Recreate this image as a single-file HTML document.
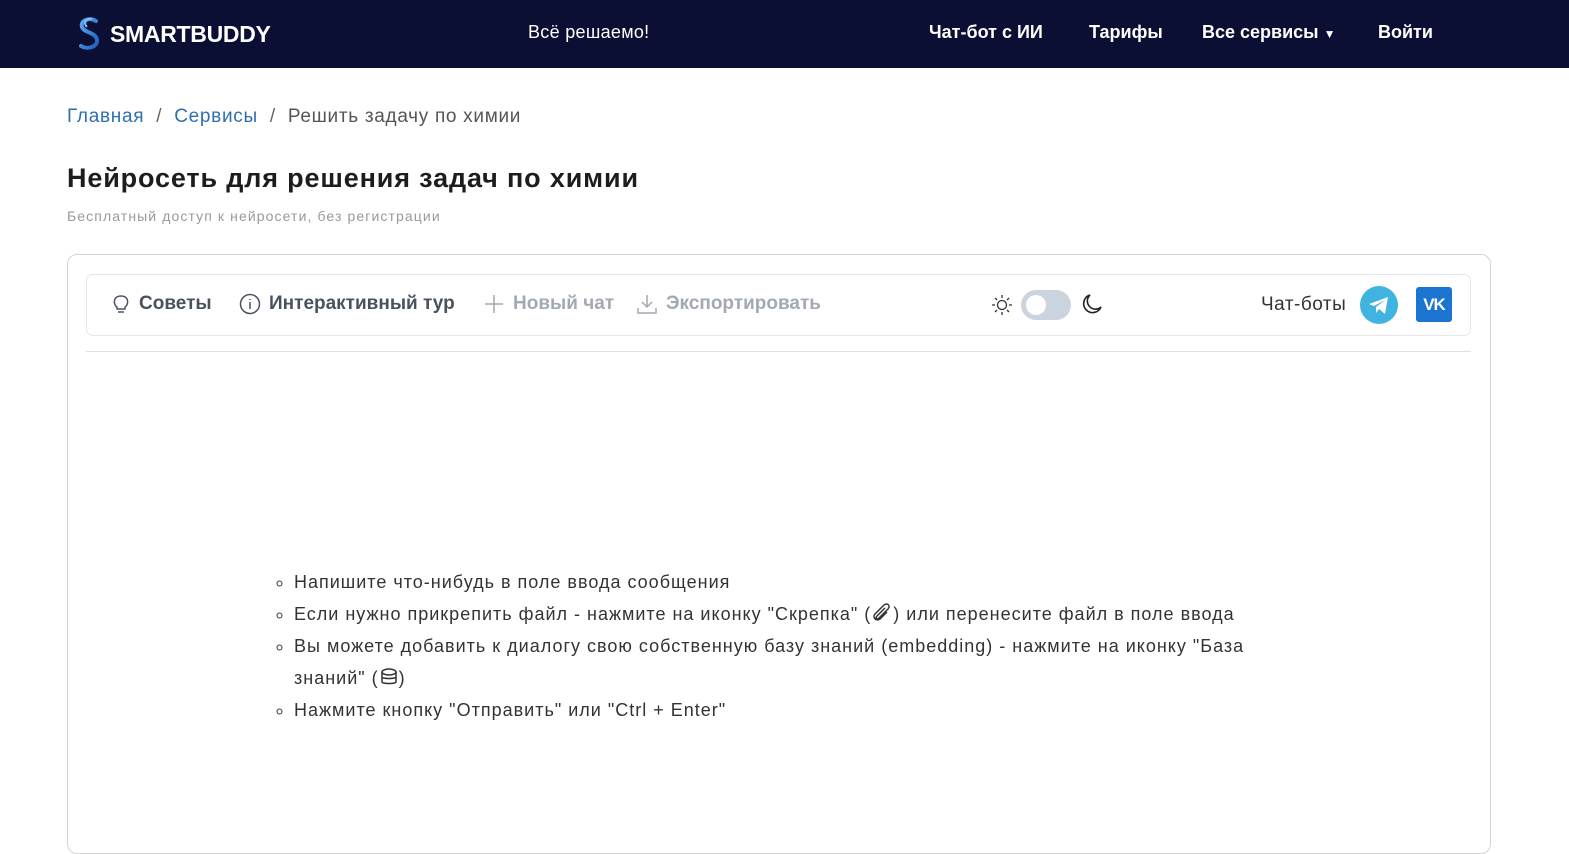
<!DOCTYPE html>
<html><head><meta charset="utf-8"><style>
*{margin:0;padding:0;box-sizing:border-box}
body{width:1569px;height:804px;overflow:hidden;background:#fff;font-family:"Liberation Sans",sans-serif;color:#212529}
.hdr{height:68px;background:#0a0f33;position:relative;color:#fff}
.hdr .logo{position:absolute;left:76px;top:17px;display:flex;align-items:center;font-weight:bold;font-size:23px;letter-spacing:-0.3px}
.hdr .t{position:absolute;font-size:18px;top:22px;letter-spacing:0.3px}
.hdr .n{position:absolute;font-size:18px;top:22px;font-weight:bold}
.bc{position:absolute;top:106px;left:67px;font-size:19px;color:#555;letter-spacing:0.7px}
.bc a{color:#2f6fb0;text-decoration:none}
.bc span{margin:0 12px;color:#666}
h1{position:absolute;top:163px;left:67px;font-size:27px;font-weight:bold;color:#1d1d1f;letter-spacing:0.85px}
.sub{position:absolute;top:208px;left:67px;font-size:14px;color:#999;letter-spacing:1.1px}
.card{position:absolute;left:67px;top:254px;width:1424px;height:600px;border:1px solid #d4d4d4;border-radius:10px}
.tb{position:absolute;left:86px;top:274px;width:1385px;height:62px;border:1px solid #e3e6ea;border-radius:7px}
.sep{position:absolute;left:86px;top:351px;width:1385px;border-top:1px solid #dee2e6}
.it{position:absolute;top:293px;font-size:19px;font-weight:bold;display:flex;align-items:center;gap:8px}
ul{position:absolute;left:294px;top:566px;width:990px;font-size:18px;line-height:32px;color:#333;list-style:circle;letter-spacing:1px}
</style></head><body>
<div class="hdr">
 <div class="logo"><svg width="26" height="34" viewBox="0 0 26 34"><defs><linearGradient id="g" x1="0" y1="0" x2="1" y2="1"><stop offset="0" stop-color="#5aa8f0"/><stop offset="1" stop-color="#1f5fc0"/></linearGradient></defs><path d="M20 4C14 0 4 3 6 10C8 16 20 15 21 23C22 30 11 33 5 29" fill="none" stroke="url(#g)" stroke-width="4" stroke-linecap="round"/><path d="M16 2C10 1 7 6 11 10" fill="none" stroke="#7ec0ff" stroke-width="2"/></svg><span style="margin-left:8px">SMARTBUDDY</span></div>
 <div class="t" style="left:528px">Всё решаемо!</div>
 <div class="n" style="left:929px">Чат-бот с ИИ</div>
 <div class="n" style="left:1089px">Тарифы</div>
 <div class="n" style="left:1202px">Все сервисы <span style="font-size:12px">▼</span></div>
 <div class="n" style="left:1378px">Войти</div>
</div>
<div class="bc"><a>Главная</a><span>/</span><a>Сервисы</a><span>/</span>Решить задачу по химии</div>
<h1>Нейросеть для решения задач по химии</h1>
<div class="sub">Бесплатный доступ к нейросети, без регистрации</div>
<div class="card"></div>
<div class="tb"></div>
<div class="sep"></div>
<div class="it" style="left:111px;color:#4a5260"><svg width="20" height="22" viewBox="0 0 20 22" fill="none" stroke="#4a5260" stroke-width="1.5"><path d="M6 14C3 12 3 8 4 6C6 2 14 2 16 6C17 8 17 12 14 14V16H6Z"/><path d="M7 19H13"/></svg>Советы</div>
<div class="it" style="left:239px;color:#4a5260"><svg width="22" height="22" viewBox="0 0 22 22" fill="none" stroke="#4a5260" stroke-width="1.5"><circle cx="11" cy="11" r="9.5"/><path d="M11 9V16M11 6V7"/></svg>Интерактивный тур</div>
<div class="it" style="left:483px;color:#a3a9b3"><svg width="22" height="22" viewBox="0 0 22 22" stroke="#a3a9b3" stroke-width="1.5"><path d="M11 2V20M2 11H20"/></svg>Новый чат</div>
<div class="it" style="left:636px;color:#a3a9b3"><svg width="22" height="22" viewBox="0 0 22 22" fill="none" stroke="#a3a9b3" stroke-width="1.5"><path d="M11 2V14M6 9L11 14L16 9M2 15V20H20V15"/></svg>Экспортировать</div>
<svg style="position:absolute;left:991px;top:294px" width="22" height="22" viewBox="0 0 22 22" fill="none" stroke="#333" stroke-width="1.3"><circle cx="11" cy="11" r="4.5"/><path d="M11 1V4M11 18V21M1 11H4M18 11H21M4 4L6 6M16 16L18 18M4 18L6 16M16 6L18 4"/></svg>
<div style="position:absolute;left:1021px;top:290px;width:50px;height:30px;border-radius:15px;background:#cbd3de"><div style="position:absolute;left:5px;top:5px;width:20px;height:20px;border-radius:50%;background:#fff"></div></div>
<svg style="position:absolute;left:1081px;top:293px" width="22" height="22" viewBox="0 0 22 22" fill="none" stroke="#222" stroke-width="1.6"><path d="M9 2A9 9 0 1 0 20 14A7 7 0 0 1 9 2Z"/></svg>
<div style="position:absolute;left:1261px;top:294px;font-size:19px;color:#333;letter-spacing:0.5px">Чат-боты</div>
<svg style="position:absolute;left:1360px;top:286px" width="38" height="38" viewBox="0 0 38 38"><circle cx="19" cy="19" r="19" fill="#40b3e0"/><path d="M9 18L28 11L25 28L19 23L16 27L16 21L25 14L14 20Z" fill="#fff"/></svg>
<div style="position:absolute;left:1416px;top:287px;width:36px;height:35px;background:#1b75d0;border-radius:3px;color:#fff;font-weight:bold;font-size:17px;text-align:center;line-height:35px;letter-spacing:-1px">VK</div>
<ul>
<li>Напишите что-нибудь в поле ввода сообщения</li>
<li>Если нужно прикрепить файл - нажмите на иконку "Скрепка" (<svg width="22" height="20" viewBox="0 0 22 20" fill="none" stroke="#333" stroke-width="1.5" style="vertical-align:-3px"><path d="M14 5L6 13C4 15 6 17 8 15L17 6C20 3 16 -1 13 2L4 11C1 14 5 19 9 16L16 9"/></svg>) или перенесите файл в поле ввода</li>
<li>Вы можете добавить к диалогу свою собственную базу знаний (embedding) - нажмите на иконку "База знаний" (<svg width="20" height="20" viewBox="0 0 20 20" fill="none" stroke="#333" stroke-width="1.5" style="vertical-align:-3px"><ellipse cx="10" cy="5" rx="7" ry="3"/><path d="M3 5V15C3 17 17 17 17 15V5M3 10C3 12 17 12 17 10"/></svg>)</li>
<li>Нажмите кнопку "Отправить" или "Ctrl + Enter"</li>
</ul>
</body></html>
